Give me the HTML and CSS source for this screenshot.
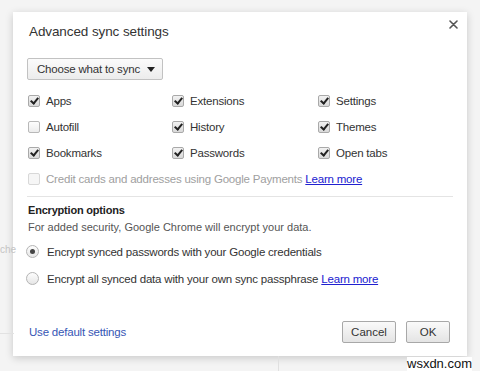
FILE: index.html
```html
<!DOCTYPE html>
<html lang="en">
<head>
  <meta charset="UTF-8">
  <title>Advanced sync settings</title>
  <link rel="stylesheet" href="styles.css">
</head>
<body>
  <div class="backdrop-text">che</div>
  <div class="backdrop-line"></div>
  <div class="backdrop-vline"></div>

  <div class="dialog">
    <div class="header">
      <h1>Advanced sync settings</h1>
      <svg class="close" width="9" height="9" viewBox="0 0 9 9">
        <path d="M1 1 L8 8 M8 1 L1 8" stroke="#555" stroke-width="1.6" stroke-linecap="round"/>
      </svg>
    </div>

    <button class="dropdown">Choose what to sync <span class="caret"></span></button>

    <div class="types">
      <label class="item"><span class="box checked"></span>Apps</label>
      <label class="item"><span class="box checked"></span>Extensions</label>
      <label class="item"><span class="box checked"></span>Settings</label>

      <label class="item"><span class="box"></span>Autofill</label>
      <label class="item"><span class="box checked"></span>History</label>
      <label class="item"><span class="box checked"></span>Themes</label>

      <label class="item"><span class="box checked"></span>Bookmarks</label>
      <label class="item"><span class="box checked"></span>Passwords</label>
      <label class="item"><span class="box checked"></span>Open tabs</label>

      <label class="item wide disabled"><span class="box"></span>Credit cards and addresses using Google Payments&nbsp;<a href="#">Learn more</a></label>
    </div>

    <div class="separator"></div>

    <h2>Encryption options</h2>
    <p class="note">For added security, Google Chrome will encrypt your data.</p>

    <div class="radios">
      <label class="item"><span class="radio selected"></span>Encrypt synced passwords with your Google credentials</label>
      <label class="item"><span class="radio"></span>Encrypt all synced data with your own sync passphrase&nbsp;<a href="#">Learn more</a></label>
    </div>

    <div class="footer">
      <a class="defaults" href="#">Use default settings</a>
      <div class="buttons">
        <button class="btn">Cancel</button>
        <button class="btn ok">OK</button>
      </div>
    </div>
  </div>

  <div class="watermark">wsxdn.com</div>
</body>
</html>
```

FILE: styles.css
```css
body {
  margin: 0;
  width: 480px;
  height: 371px;
  overflow: hidden;
  position: relative;
  background: #f4f4f4;
  font-family: "Liberation Sans", Arial, sans-serif;
  color: #333;
}

.backdrop-text {
  position: absolute;
  left: 0;
  top: 244px;
  font-size: 10px;
  color: #c4c4c4;
}

.backdrop-line {
  position: absolute;
  left: 0;
  top: 333px;
  width: 14px;
  height: 1px;
  background: #e2e2e2;
}

.backdrop-vline {
  position: absolute;
  left: 278px;
  top: 356px;
  width: 1px;
  height: 15px;
  background: #e0e0e0;
}

.dialog {
  margin: 12px 0 0 13px;
  width: 454px;
  height: 344px;
  box-sizing: border-box;
  background: #fff;
  box-shadow: 0 2px 8px rgba(0, 0, 0, 0.18);
  padding: 0 17px 13px 14px;
  display: flex;
  flex-direction: column;
}

.header {
  display: flex;
  justify-content: space-between;
  align-items: center;
  height: 38px;
}

h1 {
  margin: 0 0 0 2px;
  font-size: 13.5px;
  letter-spacing: -0.1px;
  font-weight: normal;
  color: #333;
}

.close {
  margin-right: -8px;
  margin-top: -14px;
}

.dropdown {
  align-self: flex-start;
  margin-top: 8px;
  height: 22px;
  width: 136px;
  padding: 0 0 0 9px;
  text-align: left;
  font-family: inherit;
  font-size: 11.5px;
  letter-spacing: -0.2px;
  color: #333;
  border: 1px solid #c2c2c2;
  border-radius: 2px;
  background: linear-gradient(#fbfbfb, #ececec);
  position: relative;
}

.caret {
  position: absolute;
  right: 7px;
  top: 8px;
  border-left: 4px solid transparent;
  border-right: 4px solid transparent;
  border-top: 5px solid #222;
}

.types {
  margin-top: 8px;
  display: grid;
  grid-template-columns: 144px 146px auto;
}

.item {
  display: flex;
  align-items: center;
  height: 26px;
  font-size: 11.5px;
  letter-spacing: -0.2px;
  color: #333;
  white-space: nowrap;
}

.wide {
  grid-column: 1 / 4;
  height: 25px;
}

.disabled {
  color: #a0a0a0;
}

.box {
  width: 10px;
  height: 10px;
  margin: 0 6px 0 1px;
  border: 1px solid #b8b8b8;
  border-radius: 2px;
  background: linear-gradient(#fdfdfd, #ececec);
  position: relative;
  flex: none;
}

.box.checked {
  background: linear-gradient(#f2f2f2, #d9d9d9);
  border-color: #a9a9a9;
}

.box.checked::after {
  content: "";
  position: absolute;
  left: 3px;
  top: 0;
  width: 3px;
  height: 6px;
  border-right: 2px solid #222;
  border-bottom: 2px solid #222;
  transform: rotate(40deg);
}

.disabled .box {
  border-color: #d8d8d8;
  background: #f6f6f6;
}

a {
  color: #2020d0;
  text-decoration: underline;
}

.separator {
  margin-top: 5px;
  height: 1px;
  background: #e4e4e4;
  margin-right: -3px;
}

h2 {
  margin: 5px 0 0 1px;
  font-size: 11px;
  letter-spacing: -0.2px;
  font-weight: bold;
  line-height: 16px;
  color: #222;
}

.note {
  margin: 1px 0 0 1px;
  font-size: 11px;
  line-height: 16px;
  color: #555;
}

.radios {
  margin-top: 3px;
}

.radios .item {
  height: 27px;
}

.radio {
  width: 11px;
  height: 11px;
  margin: 0 8px 0 -1px;
  border: 1px solid #b4b4b4;
  border-radius: 50%;
  background: linear-gradient(#fdfdfd, #e6e6e6);
  position: relative;
  flex: none;
}

.radio.selected::after {
  content: "";
  position: absolute;
  left: 3px;
  top: 3px;
  width: 5px;
  height: 5px;
  border-radius: 50%;
  background: #444;
}

.footer {
  margin-top: auto;
  display: flex;
  justify-content: space-between;
  align-items: center;
}

.defaults {
  color: #3656b5;
  text-decoration: none;
  font-size: 11.5px;
  letter-spacing: -0.2px;
  margin-left: 2px;
}

.buttons {
  display: flex;
  gap: 10px;
}

.btn {
  height: 22px;
  font-family: inherit;
  font-size: 11.5px;
  color: #333;
  border: 1px solid #a8a8a8;
  border-radius: 2px;
  background: linear-gradient(#fafafa, #e4e4e4);
  padding: 0;
  width: 54px;
}

.btn.ok {
  width: 44px;
}

.watermark {
  position: absolute;
  left: 407px;
  top: 357px;
  font-size: 13px;
  line-height: 14px;
  color: #111;
  background: #fff;
}
```
